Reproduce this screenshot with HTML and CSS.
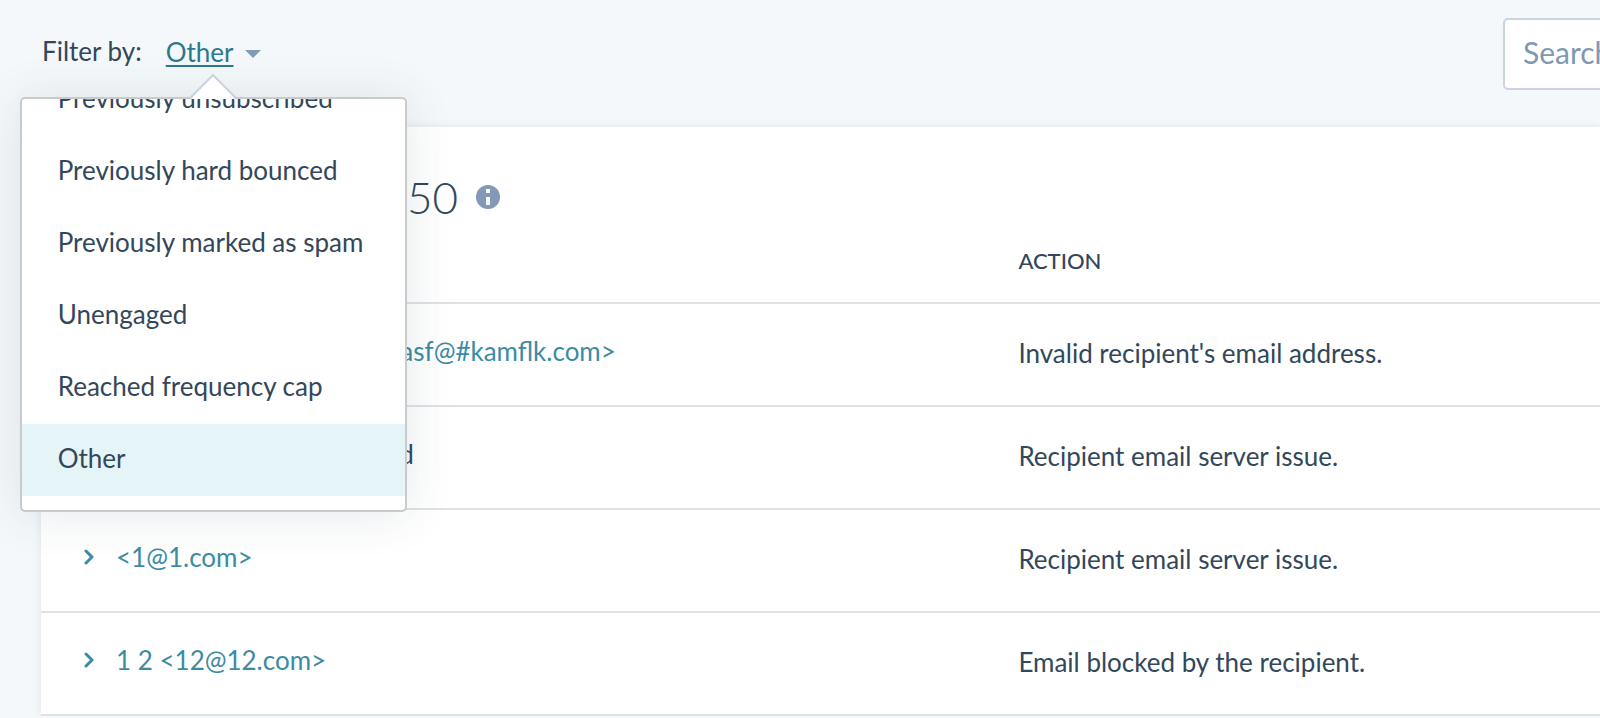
FILE: index.html
```html
<!DOCTYPE html>
<html lang="en">

<head>
    <meta charset="UTF-8">
    <meta name="viewport" content="width=device-width, initial-scale=1.0">
    <title>Email recipients</title>
    <link rel="stylesheet" href="styles.css">
</head>

<body>
    <!-- Filter bar -->
    <header class="toolbar">
        <div class="filter">
            <span class="filter-label" id="filter-label">Filter by:</span>
            <div class="dropdown">
                <button type="button" class="dropdown-toggle" id="filter-toggle" aria-labelledby="filter-label filter-toggle" aria-expanded="true">
                    <span class="dropdown-value">Other</span>
                    <svg class="caret" viewBox="0 0 16 8" aria-hidden="true"><path d="M0 0h16L8 8z"/></svg>
                </button>
                <div class="dropdown-menu">
                    <ul class="dropdown-list">
                        <li><button type="button">Previously unsubscribed</button></li>
                        <li><button type="button">Previously hard bounced</button></li>
                        <li><button type="button">Previously marked as spam</button></li>
                        <li><button type="button">Unengaged</button></li>
                        <li><button type="button">Reached frequency cap</button></li>
                        <li><button type="button" class="selected">Other</button></li>
                    </ul>
                    <svg class="dropdown-arrow" viewBox="0 0 48 26" aria-hidden="true">
                        <path class="arrow-fill" d="M1 26L24 2l23 24z"/>
                        <path class="arrow-line" d="M1 24L24 1l23 23"/>
                    </svg>
                </div>
            </div>
        </div>
        <input class="search" type="search" placeholder="Search recipients" aria-label="Search recipients">
    </header>

    <!-- Recipient list -->
    <main class="panel">
        <h1 class="panel-title">
            <span class="panel-name">Not sent: Other</span>
            <span>50</span>
            <svg class="info" viewBox="0 0 24 24" role="img" aria-label="Info">
                <circle cx="12" cy="12" r="12"/>
                <path d="M10 4h4v4h-4zM10 12h4v8h-4z"/>
            </svg>
        </h1>
        <table class="recipients">
            <thead>
                <tr>
                    <th>Recipient</th>
                    <th>Action</th>
                </tr>
            </thead>
            <tbody>
                <tr>
                    <td>
                        <div class="recipient">
                            <svg class="chevron" viewBox="0 0 10 16" aria-hidden="true"><path d="M2 2l6 6-6 6"/></svg>
                            <a href="#">Adam Smith &lt;adamsmithasf@#kamflk.com&gt;</a>
                        </div>
                    </td>
                    <td>Invalid recipient's email address.</td>
                </tr>
                <tr>
                    <td>
                        <div class="recipient">
                            <svg class="chevron" viewBox="0 0 10 16" aria-hidden="true"><path d="M2 2l6 6-6 6"/></svg>
                            <span>Contact has been rejected</span>
                        </div>
                    </td>
                    <td>Recipient email server issue.</td>
                </tr>
                <tr>
                    <td>
                        <div class="recipient">
                            <svg class="chevron" viewBox="0 0 10 16" aria-hidden="true"><path d="M2 2l6 6-6 6"/></svg>
                            <a href="#">&lt;1@1.com&gt;</a>
                        </div>
                    </td>
                    <td>Recipient email server issue.</td>
                </tr>
                <tr>
                    <td>
                        <div class="recipient">
                            <svg class="chevron" viewBox="0 0 10 16" aria-hidden="true"><path d="M2 2l6 6-6 6"/></svg>
                            <a href="#">1 2 &lt;12@12.com&gt;</a>
                        </div>
                    </td>
                    <td>Email blocked by the recipient.</td>
                </tr>
            </tbody>
        </table>
    </main>
</body>

</html>
```
FILE: styles.css
```css
:root {
    --text: #33475b;
    --link: #3b8ba4;
    --muted: #8299b8;
    --line: #dfe1e6;
    --gutter: 42px;
}

* {
    box-sizing: border-box;
}

body {
    margin: 0;
    overflow: hidden;
    background-color: #f4f8fa;
    color: var(--text);
    font-family: Lato, "Liberation Sans", sans-serif;
    font-size: 26px;
    line-height: 32px;
}

button {
    border: 0;
    background: none;
    color: inherit;
    font: inherit;
    cursor: pointer;
}

/* Filter bar */
.toolbar {
    display: flex;
    justify-content: space-between;
    align-items: center;
    padding: 18px 0 37px var(--gutter);
}

.filter {
    display: flex;
    align-items: center;
    gap: 24px;
}

.filter-label {
    padding-bottom: 6px;
}

.dropdown {
    position: relative;
}

.dropdown-toggle {
    display: flex;
    align-items: center;
    gap: 11px;
    padding: 0;
}

.dropdown-value {
    padding-bottom: 4px;
    color: #2b7a8c;
    text-decoration: underline;
    text-decoration-thickness: 2px;
    text-underline-offset: 3px;
}

.caret {
    width: 16px;
    height: 8px;
    fill: var(--muted);
}

.dropdown-menu {
    position: absolute;
    top: 61px;
    left: -146px;
    z-index: 10;
    width: 387px;
    border: 2px solid #c9cacc;
    border-radius: 5px;
    background-color: #fff;
    box-shadow: 0 2px 48px rgba(45, 62, 80, 0.12);
}

/* List is scrolled to its end, so the first entry is cut off */
.dropdown-list {
    position: relative;
    z-index: 1;
    display: flex;
    flex-direction: column;
    justify-content: flex-end;
    height: 411px;
    margin: 0;
    padding: 0 0 14px;
    overflow: hidden;
    list-style: none;
}

.dropdown-list li {
    flex: none;
}

.dropdown-list button {
    display: block;
    width: 100%;
    padding: 18px 36px 22px;
    text-align: left;
    white-space: nowrap;
}

.dropdown-list .selected {
    background-color: #e5f4f6;
}

.dropdown-arrow {
    position: absolute;
    top: -25px;
    left: 167px;
    width: 48px;
    height: 26px;
}

.arrow-fill {
    fill: #fff;
}

.arrow-line {
    fill: none;
    stroke: #cbd3de;
    stroke-width: 2;
}

.search {
    width: 320px;
    height: 72px;
    margin-right: -223px;
    padding: 0 18px 4px;
    border: 2px solid #cbd3e0;
    border-radius: 5px;
    background-color: #fff;
    font: inherit;
    font-size: 30px;
}

.search::placeholder {
    color: #7f98b4;
    opacity: 1;
}

/* Recipient list */
.panel {
    margin-left: 41px;
    background-color: #fff;
    box-shadow: 0 0 8px rgba(45, 62, 80, 0.1);
}

.panel-title {
    display: flex;
    align-items: center;
    margin: 0;
    padding: 42px var(--gutter) 18px;
    font-size: 44px;
    font-weight: 300;
    line-height: 56px;
}

.panel-name {
    width: 324px;
}

.info {
    width: 24px;
    height: 24px;
    margin-left: 18px;
    fill: var(--muted);
}

.info path {
    fill: #fff;
}

.recipients {
    width: 100%;
    table-layout: fixed;
    border-collapse: collapse;
}

.recipients th,
.recipients td {
    height: 103px;
    padding: 0 var(--gutter) 4px;
    border-bottom: 2px solid var(--line);
    text-align: left;
    white-space: nowrap;
}

.recipients th {
    width: 60%;
    height: 60px;
    padding-bottom: 24px;
    font-size: 22px;
    font-weight: 500;
    text-transform: uppercase;
}

.recipients th:last-child {
    width: 40%;
}

.recipient {
    display: flex;
    align-items: center;
    gap: 22px;
    padding: 0 1px 4px;
}

.recipient a {
    color: var(--link);
    text-decoration: none;
}

.chevron {
    width: 10px;
    height: 16px;
    fill: none;
    stroke: var(--link);
    stroke-width: 3;
    stroke-linecap: round;
    stroke-linejoin: round;
}
```
